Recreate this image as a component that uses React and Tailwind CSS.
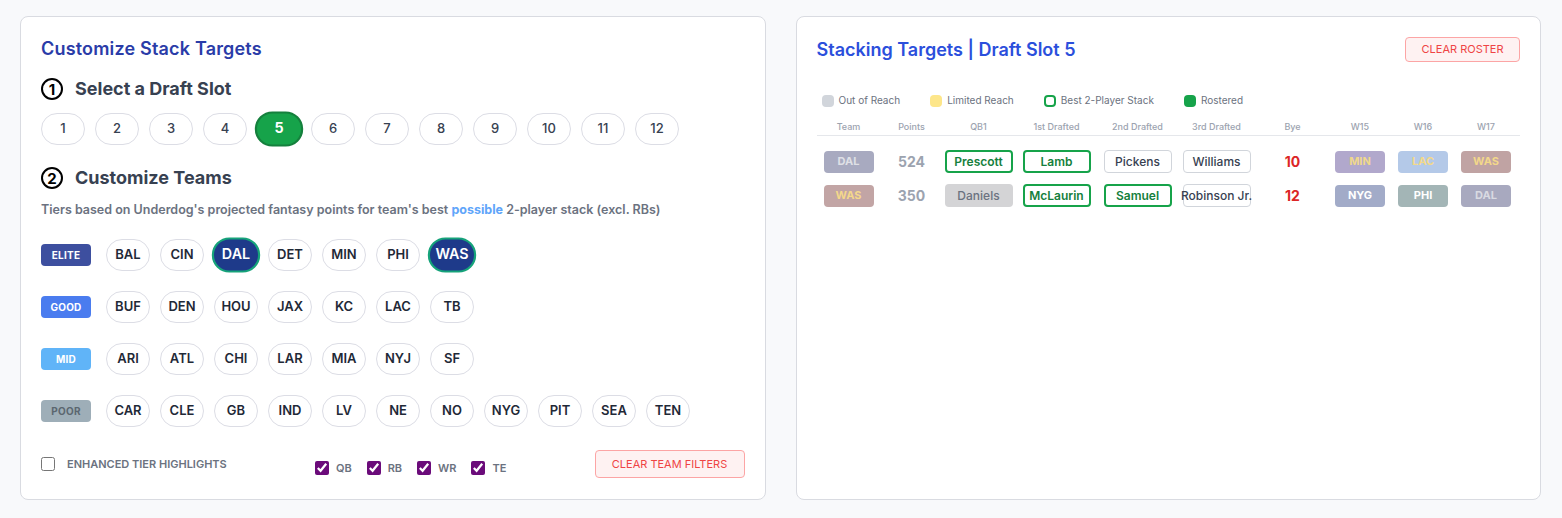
import React from "react";

const slots = [1, 2, 3, 4, 5, 6, 7, 8, 9, 10, 11, 12];

const tiers = [
  { name: "ELITE", cls: "bg-[#3d4f9f] text-white", teams: ["BAL", "CIN", "DAL", "DET", "MIN", "PHI", "WAS"] },
  { name: "GOOD", cls: "bg-[#4a7cef] text-white", teams: ["BUF", "DEN", "HOU", "JAX", "KC", "LAC", "TB"] },
  { name: "MID", cls: "bg-[#60b4f8] text-white", teams: ["ARI", "ATL", "CHI", "LAR", "MIA", "NYJ", "SF"] },
  { name: "POOR", cls: "bg-[#9eaeb8] text-[#5b6770]", teams: ["CAR", "CLE", "GB", "IND", "LV", "NE", "NO", "NYG", "PIT", "SEA", "TEN"] },
];

const selectedTeams = ["DAL", "WAS"];

const headers = ["Team", "Points", "QB1", "1st Drafted", "2nd Drafted", "3rd Drafted", "Bye", "W15", "W16", "W17"];

// column widths measured off the layout
const cols = "grid grid-cols-[64px_62px_72px_84px_78px_80px_72px_63px_63px_63px]";

const rows = [
  {
    team: { label: "DAL", cls: "bg-[#a8aac0] text-[#dfe0e6]" },
    points: 524,
    qb: { name: "Prescott", kind: "best" },
    picks: [
      { name: "Lamb", kind: "best" },
      { name: "Pickens", kind: "plain" },
      { name: "Williams", kind: "plain" },
    ],
    bye: 10,
    weeks: [
      { label: "MIN", cls: "bg-[#b1a8cc] text-[#f0d88a]" },
      { label: "LAC", cls: "bg-[#b4c9e8] text-[#f3d98a]" },
      { label: "WAS", cls: "bg-[#c0a3a3] text-[#f3d88a]" },
    ],
  },
  {
    team: { label: "WAS", cls: "bg-[#c2a5a5] text-[#f4d88a]" },
    points: 350,
    qb: { name: "Daniels", kind: "out" },
    picks: [
      { name: "McLaurin", kind: "best" },
      { name: "Samuel", kind: "best" },
      { name: "Robinson Jr.", kind: "plain" },
    ],
    bye: 12,
    weeks: [
      { label: "NYG", cls: "bg-[#a2abc8] text-white" },
      { label: "PHI", cls: "bg-[#a3b5b6] text-white" },
      { label: "DAL", cls: "bg-[#a8a9bf] text-[#d9dae2]" },
    ],
  },
];

const Circled = ({ n }) => (
  <span className="flex items-center justify-center w-[22px] h-[22px] rounded-full border-2 border-black text-[15px] font-bold text-black leading-none">
    {n}
  </span>
);

const PlayerBox = ({ p }) => {
  const base = "w-[68px] h-[23px] flex items-center justify-center rounded text-[12px] whitespace-nowrap";
  if (p.kind === "best")
    return <div className={`${base} border-2 border-[#16a34a] text-[#15803d] font-semibold`}>{p.name}</div>;
  if (p.kind === "out")
    return <div className={`${base} bg-[#d4d4d6] text-[#6b7280] font-medium`}>{p.name}</div>;
  return <div className={`${base} border border-[#d1d5db] bg-white text-[#374151] font-medium`}>{p.name}</div>;
};

const Badge = ({ b }) => (
  <div className={`w-[50px] h-[22px] flex items-center justify-center rounded text-[11px] font-bold ${b.cls}`}>
    {b.label}
  </div>
);

const Check = ({ label }) => (
  <label className="flex items-center gap-[7px]">
    <input type="checkbox" defaultChecked className="w-3.5 h-3.5 m-0 accent-[#6b0b7a]" />
    <span className="text-[11px] font-semibold text-[#6b7280]">{label}</span>
  </label>
);

export default function App() {
  return (
    <div className="min-h-screen bg-[#f8f9fb] pl-5 pr-[21px] pt-4 pb-5 [font-family:Inter,sans-serif]">
      <div className="grid grid-cols-2 gap-[30px]">
        {/* left card */}
        <div className="bg-white border border-[#d9dbe1] rounded-lg px-5 pt-5 pb-[21px] flex flex-col">
          <h2 className="text-lg leading-6 font-semibold text-[#2a3ca8] tracking-[0.01em]">Customize Stack Targets</h2>

          <div className="mt-4 flex items-center gap-3 h-6">
            <Circled n="1" />
            <span className="text-lg font-bold text-[#374151]">Select a Draft Slot</span>
          </div>
          <div className="mt-3 flex gap-2.5">
            {slots.map((s) =>
              s === 5 ? (
                <button key={s} className="w-11 h-8 rounded-full scale-110 bg-[#16a34a] border-2 border-[#15803d] text-white text-[13px] font-bold">
                  {s}
                </button>
              ) : (
                <button key={s} className="w-11 h-8 rounded-full border border-[#dcdde5] bg-white text-[#374151] text-[13px] font-medium">
                  {s}
                </button>
              )
            )}
          </div>

          <div className="mt-[21px] flex items-center gap-3 h-6">
            <Circled n="2" />
            <span className="text-lg font-bold text-[#374151]">Customize Teams</span>
          </div>
          <p className="mt-3 text-[12.5px] leading-4 font-semibold text-[#6b7280]">
            Tiers based on Underdog's projected fantasy points for team's best{" "}
            <span className="text-[#60a5fa] font-bold">possible</span> 2-player stack (excl. RBs)
          </p>

          <div className="mt-[21px] flex flex-col gap-5">
            {tiers.map((t) => (
              <div key={t.name} className="flex items-center gap-2.5">
                <div className={`w-[50px] h-[22px] mr-[5px] rounded flex items-center justify-center text-[10px] font-bold tracking-wide ${t.cls}`}>
                  {t.name}
                </div>
                {t.teams.map((tm) =>
                  selectedTeams.includes(tm) ? (
                    <button key={tm} className="w-11 h-8 rounded-full scale-110 bg-[#1e3a8a] border-2 border-[#16a37a] text-white text-[13px] font-semibold">
                      {tm}
                    </button>
                  ) : (
                    <button key={tm} className="w-11 h-8 rounded-full border border-[#dcdde5] bg-white text-[#1f2937] text-[13px] font-semibold">
                      {tm}
                    </button>
                  )
                )}
              </div>
            ))}
          </div>

          <div className="mt-[23px] flex items-center justify-between">
            <label className="flex items-center gap-3">
              <input type="checkbox" className="w-3.5 h-3.5 m-0" />
              <span className="text-[11px] font-semibold text-[#6b7280]">ENHANCED TIER HIGHLIGHTS</span>
            </label>
            <div className="flex items-center gap-[15px] pt-2">
              <Check label="QB" />
              <Check label="RB" />
              <Check label="WR" />
              <Check label="TE" />
            </div>
            <button className="w-[150px] h-7 rounded border border-[#fca5a5] bg-[#fef2f2] text-[11px] text-[#ef4444]">
              CLEAR TEAM FILTERS
            </button>
          </div>
        </div>

        {/* right card */}
        <div className="bg-white border border-[#d9dbe1] rounded-lg p-5 flex flex-col">
          <div className="flex items-center justify-between">
            <h2 className="text-lg leading-6 font-semibold text-[#2b4fdc]">Stacking Targets | Draft Slot 5</h2>
            <button className="w-[115px] h-[25px] rounded border border-[#fca5a5] bg-[#fef2f2] text-[11px] text-[#ef4444]">
              CLEAR ROSTER
            </button>
          </div>

          <div className="mt-[31px] pl-[5px] flex items-center gap-[30px] text-[10px] text-[#6b7280]">
            <div className="flex items-center gap-[5px]">
              <span className="w-3 h-3 rounded-sm bg-[#d1d5db]" />
              Out of Reach
            </div>
            <div className="flex items-center gap-[5px]">
              <span className="w-3 h-3 rounded-sm bg-[#fde68a]" />
              Limited Reach
            </div>
            <div className="flex items-center gap-[5px]">
              <span className="w-3 h-3 rounded-sm border-2 border-[#16a34a]" />
              Best 2-Player Stack
            </div>
            <div className="flex items-center gap-[5px]">
              <span className="w-3 h-3 rounded-sm bg-[#16a34a]" />
              Rostered
            </div>
          </div>

          <div className={`${cols} mt-[13px] pb-[2px] border-b border-[#e5e7eb] text-[9px] font-medium text-[#9ca3af]`}>
            {headers.map((h) => (
              <div key={h} className="text-center leading-3">
                {h}
              </div>
            ))}
          </div>

          <div className="mt-[14px] flex flex-col gap-[11px]">
            {rows.map((r, i) => (
              <div key={i} className={`${cols} items-center`}>
                <div className="flex justify-center"><Badge b={r.team} /></div>
                <div className="text-center text-[14px] font-bold text-[#9ca3af]">{r.points}</div>
                <div className="flex justify-center"><PlayerBox p={r.qb} /></div>
                {r.picks.map((p) => (
                  <div key={p.name} className="flex justify-center"><PlayerBox p={p} /></div>
                ))}
                <div className="text-center text-[14px] font-bold text-[#dc2626]">{r.bye}</div>
                {r.weeks.map((w, j) => (
                  <div key={j} className="flex justify-center"><Badge b={w} /></div>
                ))}
              </div>
            ))}
          </div>
        </div>
      </div>
    </div>
  );
}
